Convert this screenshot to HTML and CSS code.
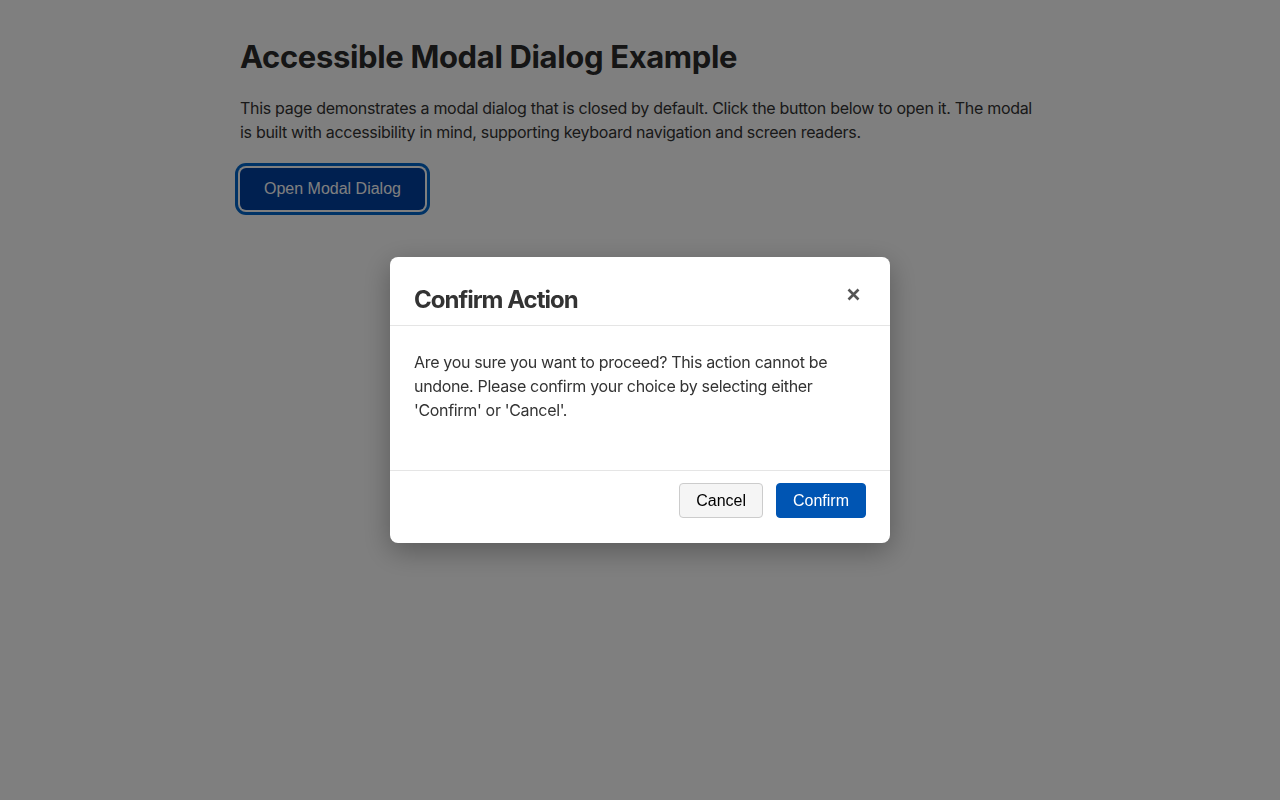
FILE: index.html
```html
<!DOCTYPE html>
<html lang="en">
<head>
<meta charset="utf-8">
<title>Accessible Modal Dialog Example</title>
<link rel="stylesheet" href="styles.css">
</head>
<body>
<main class="page">
  <h1 class="page-title">Accessible Modal Dialog Example</h1>
  <p class="page-text">This page demonstrates a modal dialog that is closed by default. Click the button below to open it. The modal is built with accessibility in mind, supporting keyboard navigation and screen readers.</p>
  <button class="open-btn" type="button">Open Modal Dialog</button>
</main>
<div class="overlay">
  <div class="modal" role="dialog" aria-modal="true" aria-labelledby="modal-title">
    <div class="modal-header">
      <h2 class="modal-title" id="modal-title">Confirm Action</h2>
      <button class="close-btn" type="button" aria-label="Close">
        <svg width="13" height="13" viewBox="0 0 13 13" aria-hidden="true"><path d="M1.5 1.5 L11.5 11.5 M11.5 1.5 L1.5 11.5" stroke="#555" stroke-width="2.6" stroke-linecap="butt"/></svg>
      </button>
    </div>
    <div class="modal-body">
      <p>Are you sure you want to proceed? This action cannot be undone. Please confirm your choice by selecting either 'Confirm' or 'Cancel'.</p>
    </div>
    <div class="modal-footer">
      <button class="btn btn-cancel" type="button">Cancel</button>
      <button class="btn btn-confirm" type="button">Confirm</button>
    </div>
  </div>
</div>
</body>
</html>
```
FILE: styles.css
```css
* { box-sizing: border-box; }
html, body { margin: 0; padding: 0; }
body {
  background: #ffffff;
  font-family: Inter, "Noto Sans", sans-serif;
  color: #333;
  height: 800px;
}
.page {
  width: 800px;
  margin: 0 auto;
  padding-top: 38px;
}
.page-title {
  margin: 0 0 20px;
  font-size: 31px;
  line-height: 38px;
  font-weight: 700;
  color: #2a2a2a;
  letter-spacing: -0.35px;
}
.page-text {
  margin: 0 0 24px;
  font-size: 16px;
  line-height: 24px;
  color: #333;
  letter-spacing: -0.3px;
}
.open-btn {
  font-family: "Liberation Sans", Arial, sans-serif;
  font-size: 16px;
  line-height: 18px;
  padding: 12px 24px;
  border: 0;
  border-radius: 6px;
  background: #0040a0;
  color: #fff;
  box-shadow: 0 0 0 2px #fff, 0 0 0 5px #0066cc;
}
.overlay {
  position: fixed;
  inset: 0;
  background: rgba(0, 0, 0, 0.5);
  display: flex;
  align-items: center;
  justify-content: center;
}
.modal {
  width: 500px;
  background: #fff;
  border-radius: 8px;
  box-shadow: 0 8px 28px rgba(0, 0, 0, 0.3);
}
.modal-header {
  display: flex;
  justify-content: space-between;
  align-items: flex-start;
  padding: 20px 24px 8px;
  border-bottom: 1px solid #e5e5e5;
}
.modal-title {
  margin: 5px 0 0;
  font-size: 24px;
  line-height: 35px;
  font-weight: 700;
  color: #333;
  letter-spacing: -1px;
}
.close-btn {
  width: 25px;
  height: 34px;
  padding: 0;
  border: 0;
  background: transparent;
  display: flex;
  align-items: center;
  justify-content: center;
}
.modal-body {
  padding: 24px 24px 0;
}
.modal-body p {
  margin: 0 0 48px;
  font-size: 16px;
  line-height: 24px;
  color: #333;
  letter-spacing: -0.33px;
}
.modal-footer {
  display: flex;
  justify-content: flex-end;
  gap: 13px;
  padding: 12px 24px 25px;
  border-top: 1px solid #e5e5e5;
}
.btn {
  font-family: "Liberation Sans", Arial, sans-serif;
  font-size: 16px;
  line-height: 19px;
  height: 35px;
  padding: 7px 16px;
  border-radius: 4px;
}
.btn-cancel {
  background: #f5f5f5;
  border: 1px solid #ccc;
  color: #000;
}
.btn-confirm {
  background: #0055b3;
  border: 1px solid #0055b3;
  color: #fff;
}
```
